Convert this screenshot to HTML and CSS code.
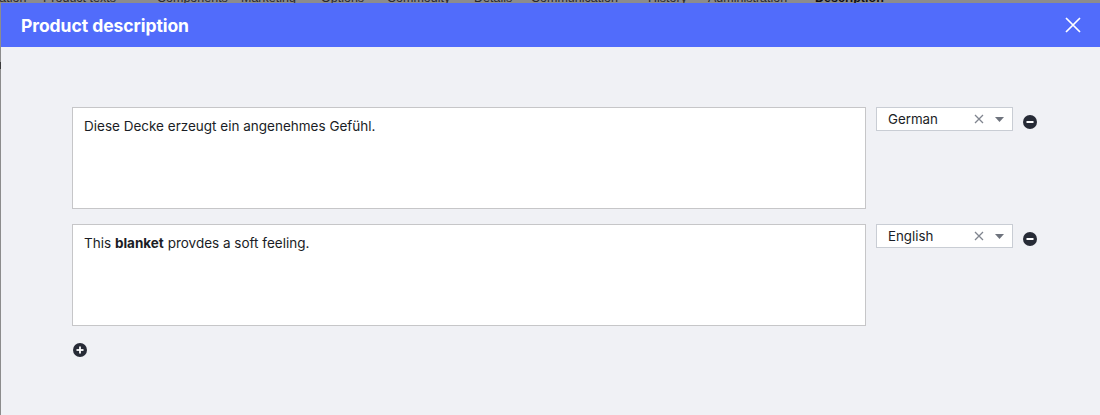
FILE: index.html
```html
<!DOCTYPE html>
<html lang="en">
<head>
<meta charset="utf-8">
<title>Product description</title>
<link rel="stylesheet" href="styles.css">
</head>
<body>
<div class="backdrop-nav">
  <span class="nav-item n0">Variation</span>
  <span class="nav-item n1">Product texts</span>
  <span class="nav-item n2">Components</span>
  <span class="nav-item n3">Marketing</span>
  <span class="nav-item n4">Options</span>
  <span class="nav-item n5">Commodity</span>
  <span class="nav-item n6">Details</span>
  <span class="nav-item n7">Communication</span>
  <span class="nav-item n8">History</span>
  <span class="nav-item n9">Administration</span>
  <span class="nav-item n10 active">Description</span>
</div>
<div class="stage">
  <div class="backdrop-edge"><span class="edge-mark"></span></div>
  <div class="modal">
    <div class="modal-header">
      <h1 class="modal-title">Product description</h1>
      <button class="close-btn" aria-label="Close">
        <svg width="16" height="16" viewBox="0 0 16 16"><path d="M1 1 L15 15 M15 1 L1 15" stroke="#fff" stroke-width="1.7" fill="none"/></svg>
      </button>
    </div>
    <div class="modal-body">
      <div class="rows">
        <div class="row">
          <div class="editor" contenteditable="true">Diese Decke erzeugt ein angenehmes Gefühl.</div>
          <div class="select">
            <span class="select-value">German</span>
            <span class="select-clear"><svg width="10" height="10" viewBox="0 0 10 10"><path d="M1 1 L9 9 M9 1 L1 9" stroke="#80858f" stroke-width="1.3" fill="none"/></svg></span>
            <span class="select-arrow"><svg width="9" height="5" viewBox="0 0 9 5"><path d="M0 0 H9 L4.5 5 Z" fill="#6e737d"/></svg></span>
          </div>
          <button class="icon-btn remove" aria-label="Remove">
            <svg width="14" height="14" viewBox="0 0 14 14"><circle cx="7" cy="7" r="7" fill="#272b36"/><rect x="3.5" y="6" width="7" height="2" fill="#fff"/></svg>
          </button>
        </div>
        <div class="row">
          <div class="editor" contenteditable="true">This <b>blanket</b> provdes a soft feeling.</div>
          <div class="select">
            <span class="select-value">English</span>
            <span class="select-clear"><svg width="10" height="10" viewBox="0 0 10 10"><path d="M1 1 L9 9 M9 1 L1 9" stroke="#80858f" stroke-width="1.3" fill="none"/></svg></span>
            <span class="select-arrow"><svg width="9" height="5" viewBox="0 0 9 5"><path d="M0 0 H9 L4.5 5 Z" fill="#6e737d"/></svg></span>
          </div>
          <button class="icon-btn remove" aria-label="Remove">
            <svg width="14" height="14" viewBox="0 0 14 14"><circle cx="7" cy="7" r="7" fill="#272b36"/><rect x="3.5" y="6" width="7" height="2" fill="#fff"/></svg>
          </button>
        </div>
      </div>
      <button class="icon-btn add" aria-label="Add">
        <svg width="14" height="14" viewBox="0 0 14 14"><circle cx="7" cy="7" r="7" fill="#272b36"/><rect x="3.5" y="6.1" width="7" height="1.8" fill="#fff"/><rect x="6.1" y="3.5" width="1.8" height="7" fill="#fff"/></svg>
      </button>
    </div>
  </div>
</div>
</body>
</html>
```
FILE: styles.css
```css
* { box-sizing: border-box; }
html, body { margin: 0; padding: 0; }
body {
  width: 1100px;
  height: 415px;
  overflow: hidden;
  background: #8c8c8c;
  font-family: Inter, "Liberation Sans", sans-serif;
  color: #1d2029;
}
.backdrop-nav {
  height: 3px;
  overflow: hidden;
  position: relative;
  white-space: nowrap;
  font-family: "Liberation Sans", sans-serif;
  font-size: 12.5px;
  color: #2a2a2a;
}
.nav-item {
  position: absolute;
  top: -9px;
  line-height: 14px;
}
.n0 { left: -22px; }
.n1 { left: 43px; }
.n2 { left: 157px; }
.n3 { left: 241px; }
.n4 { left: 321px; }
.n5 { left: 387px; }
.n6 { left: 474px; }
.n7 { left: 531px; }
.n8 { left: 648px; }
.n9 { left: 708px; }
.n10 { left: 815px; }
.nav-item.active { font-weight: bold; color: #111; }
.stage {
  display: flex;
  height: 412px;
}
.backdrop-edge {
  width: 1px;
  flex: none;
  position: relative;
}
.edge-mark {
  position: absolute;
  left: 0;
  top: 59px;
  width: 1px;
  height: 7px;
  background: #3b3b3b;
}
.modal {
  flex: 1;
  background: #f0f1f5;
  display: flex;
  flex-direction: column;
}
.modal-header {
  height: 44px;
  background: #516cfb;
  display: flex;
  align-items: center;
  justify-content: space-between;
  padding: 0 19px 0 20px;
  flex: none;
}
.modal-title {
  margin: 0;
  color: #fff;
  font-size: 17.5px;
  font-weight: 700;
  letter-spacing: -0.05px;
}
.close-btn {
  border: 0;
  background: none;
  padding: 0;
  width: 16px;
  height: 16px;
  display: flex;
  cursor: pointer;
}
.modal-body {
  padding: 60px 0 0 71px;
}
.rows {
  display: flex;
  flex-direction: column;
  gap: 15px;
}
.row {
  display: flex;
  align-items: flex-start;
}
.editor {
  width: 794px;
  height: 102px;
  background: #fff;
  border: 1px solid #c6c6c8;
  padding: 10px 11px;
  font-size: 13.5px;
  line-height: 17px;
  color: #1a1d25;
  outline: none;
}
.editor b { font-weight: 700; }
.select {
  margin-left: 10px;
  width: 137px;
  height: 24px;
  background: #fff;
  border: 1px solid #c9cdd4;
  display: flex;
  align-items: center;
  padding-left: 11px;
  font-size: 13.3px;
  color: #1a1d25;
}
.select-value { flex: 1; }
.select-clear {
  display: flex;
  width: 10px;
  margin-right: 11px;
}
.select-arrow {
  display: flex;
  width: 9px;
  margin-right: 8px;
}
.icon-btn {
  border: 0;
  background: none;
  padding: 0;
  display: flex;
  cursor: pointer;
}
.remove {
  margin-left: 10px;
  margin-top: 8px;
}
.add {
  margin-top: 17px;
  margin-left: 1px;
}
```
